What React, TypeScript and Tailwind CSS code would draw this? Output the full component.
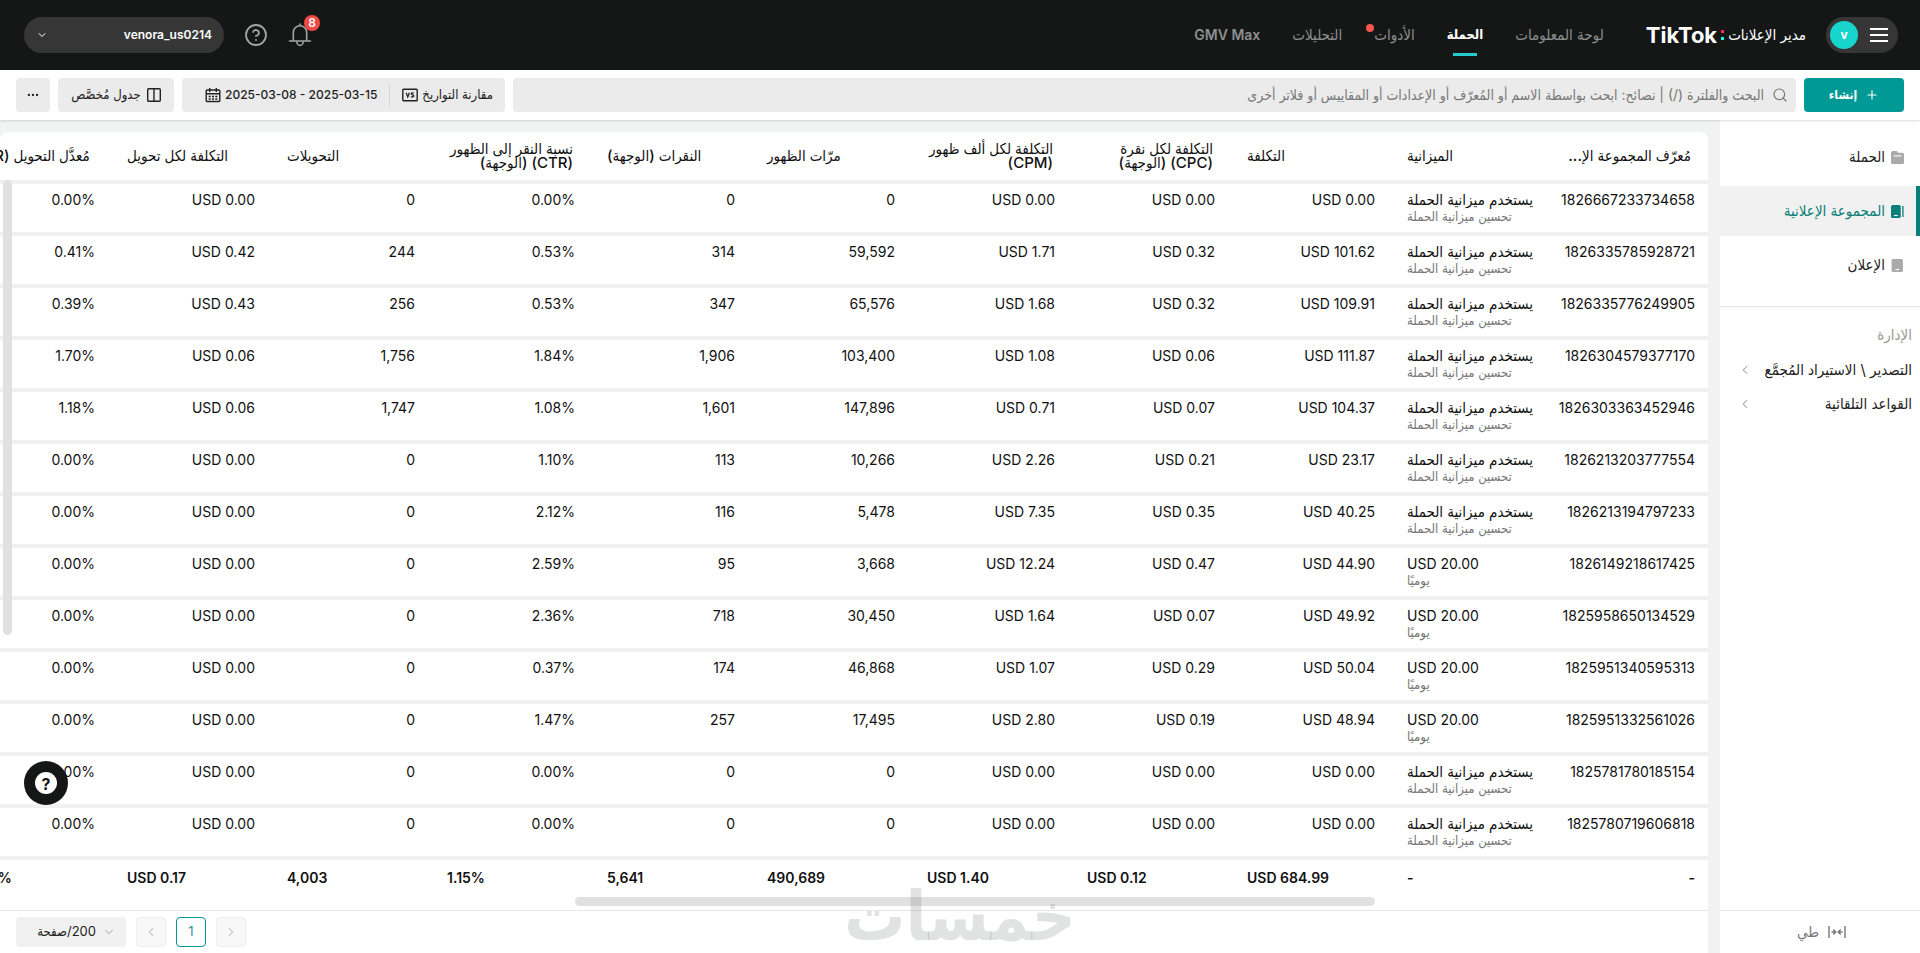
import { ChevronDown, ChevronLeft, ChevronRight, CircleHelp, MoreHorizontal, Plus, Search } from 'lucide-react';

type Row = {
  id: string;
  budget?: string;
  cost: string;
  cpc: string;
  cpm: string;
  impressions: string;
  clicks: string;
  ctr: string;
  conversions: string;
  cpa: string;
  cvr: string;
};

const rows: Row[] = [
  { id: '1826667233734658', cost: '0.00', cpc: '0.00', cpm: '0.00', impressions: '0', clicks: '0', ctr: '0.00%', conversions: '0', cpa: '0.00', cvr: '0.00%' },
  { id: '1826335785928721', cost: '101.62', cpc: '0.32', cpm: '1.71', impressions: '59,592', clicks: '314', ctr: '0.53%', conversions: '244', cpa: '0.42', cvr: '0.41%' },
  { id: '1826335776249905', cost: '109.91', cpc: '0.32', cpm: '1.68', impressions: '65,576', clicks: '347', ctr: '0.53%', conversions: '256', cpa: '0.43', cvr: '0.39%' },
  { id: '1826304579377170', cost: '111.87', cpc: '0.06', cpm: '1.08', impressions: '103,400', clicks: '1,906', ctr: '1.84%', conversions: '1,756', cpa: '0.06', cvr: '1.70%' },
  { id: '1826303363452946', cost: '104.37', cpc: '0.07', cpm: '0.71', impressions: '147,896', clicks: '1,601', ctr: '1.08%', conversions: '1,747', cpa: '0.06', cvr: '1.18%' },
  { id: '1826213203777554', cost: '23.17', cpc: '0.21', cpm: '2.26', impressions: '10,266', clicks: '113', ctr: '1.10%', conversions: '0', cpa: '0.00', cvr: '0.00%' },
  { id: '1826213194797233', cost: '40.25', cpc: '0.35', cpm: '7.35', impressions: '5,478', clicks: '116', ctr: '2.12%', conversions: '0', cpa: '0.00', cvr: '0.00%' },
  { id: '1826149218617425', budget: 'USD 20.00', cost: '44.90', cpc: '0.47', cpm: '12.24', impressions: '3,668', clicks: '95', ctr: '2.59%', conversions: '0', cpa: '0.00', cvr: '0.00%' },
  { id: '1825958650134529', budget: 'USD 20.00', cost: '49.92', cpc: '0.07', cpm: '1.64', impressions: '30,450', clicks: '718', ctr: '2.36%', conversions: '0', cpa: '0.00', cvr: '0.00%' },
  { id: '1825951340595313', budget: 'USD 20.00', cost: '50.04', cpc: '0.29', cpm: '1.07', impressions: '46,868', clicks: '174', ctr: '0.37%', conversions: '0', cpa: '0.00', cvr: '0.00%' },
  { id: '1825951332561026', budget: 'USD 20.00', cost: '48.94', cpc: '0.19', cpm: '2.80', impressions: '17,495', clicks: '257', ctr: '1.47%', conversions: '0', cpa: '0.00', cvr: '0.00%' },
  { id: '1825781780185154', cost: '0.00', cpc: '0.00', cpm: '0.00', impressions: '0', clicks: '0', ctr: '0.00%', conversions: '0', cpa: '0.00', cvr: '0.00%' },
  { id: '1825780719606818', cost: '0.00', cpc: '0.00', cpm: '0.00', impressions: '0', clicks: '0', ctr: '0.00%', conversions: '0', cpa: '0.00', cvr: '0.00%' },
];

const metricHeaders = [
  'التكلفة',
  'التكلفة لكل نقرة (CPC) (الوجهة)',
  'التكلفة لكل ألف ظهور (CPM)',
  'مرّات الظهور',
  'النقرات (الوجهة)',
  'نسبة النقر إلى الظهور (CTR) (الوجهة)',
  'التحويلات',
  'التكلفة لكل تحويل',
  'مُعدَّل التحويل (CVR)',
];

const totals = ['USD 684.99', 'USD 0.12', 'USD 1.40', '490,689', '5,641', '1.15%', '4,003', 'USD 0.17', '0.82%'];

function MenuIcon() {
  return (
    <svg viewBox="0 0 18 14" className="h-3.5 w-[18px]" stroke="currentColor" strokeWidth="2">
      <path d="M0 1h18M0 7h18M0 13h18" />
    </svg>
  );
}

function BellIcon() {
  return (
    <svg viewBox="0 0 24 24" className="size-6" fill="none" stroke="currentColor" strokeWidth="1.6" strokeLinecap="round">
      <path d="M12 1v1.500M5.300 18V9.500a6.700 6.700 0 0 1 13.400 0V18M1.500 18h21M8.800 18.500a3.200 4 0 0 0 6.400 0" />
    </svg>
  );
}

function CalendarIcon() {
  return (
    <svg viewBox="0 0 16 16" className="size-4" fill="none" stroke="currentColor" strokeWidth="1.4">
      <rect x="1.200" y="3" width="13.600" height="11.500" rx="1" />
      <path d="M1 6.800h14M4.700 1v4M11.300 1v4M3.700 9.500h2M7 9.500h2M10.300 9.500h2M3.700 12h2M7 12h2M10.300 12h2" />
    </svg>
  );
}

function CompareIcon() {
  return (
    <svg viewBox="0 0 16 14" className="h-3.5 w-4" fill="none" stroke="currentColor" strokeWidth="1.4">
      <rect x="0.800" y="1.200" width="14.400" height="11.600" rx="0.800" />
      <path d="M4.200 4.800 5.800 9 7.400 4.800M11.800 5.300c-1.200-.9-2.700-.5-2.500.5.2 1.100 2.500.9 2.500 2 0 1.200-1.800 1.400-2.800.6" strokeWidth="1.300" />
    </svg>
  );
}

function ColumnsIcon() {
  return (
    <svg viewBox="0 0 14 14" className="size-3.5" fill="none" stroke="currentColor" strokeWidth="1.4">
      <rect x="0.700" y="0.700" width="12.600" height="12.600" rx="1" />
      <path d="M7 1v12" />
    </svg>
  );
}

function CampaignIcon() {
  return (
    <svg viewBox="0 0 12 12" className="size-[13px]">
      <path d="M1.500 0h4l1 1.500h4A1.500 1.500 0 0 1 12 3v7.500a1.500 1.500 0 0 1-1.500 1.500h-9A1.500 1.500 0 0 1 0 10.500v-9A1.500 1.500 0 0 1 1.500 0Z" fill="currentColor" />
      <path d="M2.500 4.500h7" stroke="#fff" />
    </svg>
  );
}

function AdGroupIcon() {
  return (
    <svg viewBox="0 0 12 12" className="size-[13px]">
      <rect width="9" height="12" rx="1.500" fill="currentColor" />
      <path d="M11 1v10" stroke="currentColor" strokeWidth="1.200" />
      <path d="M2.700 9.700h3.600" stroke="#fff" />
    </svg>
  );
}

function AdIcon() {
  return (
    <svg viewBox="0 0 12 12" className="size-[13px]">
      <rect x="0.500" width="10.500" height="12" rx="1.500" fill="currentColor" />
      <path d="M4 9.700h3.600" stroke="#fff" />
    </svg>
  );
}

function CollapseIcon() {
  return (
    <svg viewBox="0 0 20 14" className="h-3.5 w-5" fill="none" stroke="currentColor" strokeWidth="1.4">
      <path d="M2 1v12M18 1v12M4.500 7h4M6.300 4.500 8.800 7 6.300 9.500M15.500 7h-4M13.700 4.500 11.200 7l2.500 2.500" />
    </svg>
  );
}

function TopBar() {
  const link = 'text-[#8d8f8f] hover:text-white';
  return (
    <header className="flex h-[70px] items-center bg-[#151717] pr-[22px] pl-6 text-[15px]">
      <button type="button" aria-label="القائمة" className="flex h-9 w-[72px] items-center justify-between rounded-full bg-[#363636] pr-2.5 pl-1 text-white">
        <MenuIcon />
        <span className="grid size-7 place-items-center rounded-full bg-[#17d5cd] text-xs font-bold">v</span>
      </button>
      <a href="#home" className="mr-5 flex items-center gap-1 text-white">
        <span>مدير الإعلانات</span>
        <span className="flex flex-col gap-1">
          <i className="size-[3px] bg-[#fe2c55]" />
          <i className="size-[3px] bg-[#25f4ee]" />
        </span>
        <span className="text-[22px] font-bold" dir="ltr">TikTok</span>
      </a>
      <nav className="mr-[42px] flex items-center gap-8">
        <a href="#dashboard" className={link}>لوحة المعلومات</a>
        <a href="#campaign" className="relative text-[13px] font-bold text-white">
          الحملة
          <span className="absolute top-7 left-1/2 h-[3px] w-6 -translate-x-1/2 bg-[#25c9d0]" />
        </a>
        <a href="#tools" className={`relative ${link}`}>
          الأدوات
          <span className="absolute top-0 -left-2 size-2 rounded-full bg-[#f5554f]" />
        </a>
        <a href="#analytics" className={link}>التحليلات</a>
        <a href="#gmv" className={`text-sm font-semibold ${link}`}>GMV Max</a>
      </nav>
      <div className="mr-auto flex items-center gap-5">
        <button type="button" aria-label="الإشعارات" className="relative text-[#a3a5a5]">
          <BellIcon />
          <span className="absolute -top-2 left-4 grid size-4 place-items-center rounded-full bg-[#f04a45] text-xs font-semibold text-white">8</span>
        </button>
        <button type="button" aria-label="مساعدة" className="text-[#a3a5a5]">
          <CircleHelp className="size-6" strokeWidth={1.8} />
        </button>
        <button type="button" className="flex h-9 w-[200px] items-center justify-between rounded-full bg-[#363636] px-3 text-xs font-semibold text-white">
          venora_us0214
          <ChevronDown className="size-3" />
        </button>
      </div>
    </header>
  );
}

function Toolbar() {
  const box = 'flex h-[34px] items-center rounded bg-[#ebebeb]';
  return (
    <div className="relative z-10 flex h-[50px] items-center gap-2 bg-white px-4 text-[13px] text-[#222] shadow-sm">
      <button type="button" className="flex h-[34px] w-[100px] items-center justify-center gap-2 rounded bg-[#009995] text-xs font-semibold text-white">
        <Plus className="size-3.5" />
        إنشاء
      </button>
      <label className={`${box} flex-1 gap-2 px-2 text-sm text-[#777]`}>
        <Search className="size-4" strokeWidth={1.8} />
        <input
          type="text"
          aria-label="بحث"
          className="flex-1 bg-transparent outline-none placeholder:text-[#777]"
          placeholder="البحث والفلترة (/) | نصائح: ابحث بواسطة الاسم أو المُعرّف أو الإعدادات أو المقاييس أو فلاتر أخرى"
        />
      </label>
      <div className={`${box} w-[323px]`}>
        <button type="button" className="flex items-center gap-1 px-3">
          مقارنة التواريخ
          <CompareIcon />
        </button>
        <span className="h-[22px] w-px bg-[#d5d5d5]" />
        <button type="button" className="flex items-center gap-1 pr-3 text-xs font-medium">
          <bdi dir="ltr">2025-03-08 - 2025-03-15</bdi>
          <CalendarIcon />
        </button>
      </div>
      <button type="button" className={`${box} w-[116px] justify-center gap-1.5`}>
        <ColumnsIcon />
        جدول مُخصَّص
      </button>
      <button type="button" aria-label="المزيد" className={`${box} w-[34px] justify-center`}>
        <MoreHorizontal className="size-3.5" />
      </button>
    </div>
  );
}

function Sidebar() {
  const item = 'flex h-[50px] items-center gap-1.5 border-r-4 pr-3';
  return (
    <aside className="flex w-[200px] shrink-0 flex-col bg-white text-[15px] text-[#222]">
      <nav className="flex flex-col gap-1 border-b border-[#e6e6e6] pt-3 pb-4">
        <a href="#campaigns" className={`${item} border-transparent`}>
          <span className="text-[#aaa]"><CampaignIcon /></span>
          الحملة
        </a>
        <a href="#adgroups" className={`${item} border-[#0a7f79] bg-[#f1f1f1] text-[#0a7f79]`}>
          <AdGroupIcon />
          المجموعة الإعلانية
        </a>
        <a href="#ads" className={`${item} border-transparent`}>
          <span className="text-[#aaa]"><AdIcon /></span>
          الإعلان
        </a>
      </nav>
      <h2 className="mt-4 h-6 px-2 leading-6 text-[#999]">الإدارة</h2>
      <a href="#bulk" className="mt-1.5 flex h-[34px] items-center justify-between pr-2 pl-[18px]">
        التصدير \ الاستيراد المُجمَّع
        <ChevronLeft className="size-3.5 text-[#777]" strokeWidth={1.5} />
      </a>
      <a href="#rules" className="flex h-[34px] items-center justify-between pr-2 pl-[18px]">
        القواعد التلقائية
        <ChevronLeft className="size-3.5 text-[#777]" strokeWidth={1.5} />
      </a>
      <button type="button" className="mt-auto flex h-[43px] items-center gap-2 border-t border-[#e6e6e6] pr-[73px] text-[#777]">
        <CollapseIcon />
        طي
      </button>
    </aside>
  );
}

function AdGroupTable() {
  const th = 'h-[52px] border-b-4 border-[#f1f1f1] align-middle font-medium';
  const td = 'h-[52px] px-4 pt-1.5 align-top border-b-4 border-[#f1f1f1]';
  return (
    <div className="relative overflow-hidden rounded-t-lg bg-white">
      <table className="w-[1757px] table-fixed border-separate border-spacing-0 text-sm text-[#111]">
        <thead className="text-[15px] leading-[14px]">
          <tr>
            <th scope="col" className={`${th} w-[157px] pr-[17px] pl-0 text-right whitespace-nowrap`}>مُعرّف المجموعة الإ...</th>
            <th scope="col" className={`${th} w-40 px-4 text-left`}>الميزانية</th>
            {metricHeaders.map((h) => (
              <th key={h} scope="col" className={`${th} w-40 px-4`}>
                <div className="flex justify-end">
                  <span className="max-w-[126px] text-right">{h}</span>
                </div>
              </th>
            ))}
          </tr>
        </thead>
        <tbody className="leading-5">
          {rows.map((r) => (
            <tr key={r.id}>
              <td className={`${td} pr-[13px] pl-0 text-right`}>{r.id}</td>
              <td className={`${td} pr-0 text-left`}>
                {r.budget ? <div>{r.budget}</div> : <div className="text-[15px] whitespace-nowrap">يستخدم ميزانية الحملة</div>}
                <div className="text-[13px] leading-3 text-[#777]">{r.budget ? 'يوميًا' : 'تحسين ميزانية الحملة'}</div>
              </td>
              {[`USD ${r.cost}`, `USD ${r.cpc}`, `USD ${r.cpm}`, r.impressions, r.clicks, r.ctr, r.conversions, `USD ${r.cpa}`, r.cvr].map((v, i) => (
                <td key={i} className={`${td} text-right`}>
                  <bdi dir="ltr">{v}</bdi>
                </td>
              ))}
            </tr>
          ))}
        </tbody>
        <tfoot className="font-semibold">
          <tr>
            <td className="h-[50px] pr-[13px] pb-3.5 text-right">-</td>
            <td className="px-4 pb-3.5 text-left">-</td>
            {totals.map((t) => (
              <td key={t} className="px-4 pb-3.5 text-left">
                <bdi dir="ltr">{t}</bdi>
              </td>
            ))}
          </tr>
        </tfoot>
      </table>
      <span className="absolute top-12 left-[3px] h-[455px] w-[9px] rounded-full bg-[#e1e1e1]" />
      <span className="absolute right-[333px] bottom-1 h-[9px] w-[800px] rounded-full bg-[#e1e1e1]" />
    </div>
  );
}

function Pagination() {
  const page = 'grid h-[30px] w-[30px] place-items-center rounded border';
  return (
    <footer className="flex h-[43px] flex-row-reverse items-center gap-2.5 border-t border-[#e6e6e6] bg-white pl-4 text-[13px]">
      <div className="relative flex items-center">
        <select aria-label="عدد الصفوف في الصفحة" className="h-[30px] w-[110px] appearance-none rounded bg-[#f1f1f1] pr-[30px] pl-3 text-[#222]">
          <option>200/صفحة</option>
        </select>
        <ChevronDown className="pointer-events-none absolute right-2.5 size-3.5 text-[#999]" strokeWidth={1.5} />
      </div>
      <button type="button" aria-label="السابق" className={`${page} border-[#eee] bg-[#f8f8f8] text-[#ccc]`}>
        <ChevronLeft className="size-3.5" />
      </button>
      <button type="button" className={`${page} border-[#009995] text-[#2a8fa0]`}>1</button>
      <button type="button" aria-label="التالي" className={`${page} border-[#eee] bg-[#f8f8f8] text-[#ccc]`}>
        <ChevronRight className="size-3.5" />
      </button>
    </footer>
  );
}

export default function App() {
  return (
    <div dir="rtl" className="relative flex min-h-screen flex-col overflow-hidden bg-[#f1f2f2] font-['Inter','DejaVu_Sans_Condensed','DejaVu_Sans',sans-serif]">
      <TopBar />
      <Toolbar />
      <div className="flex flex-1">
        <Sidebar />
        <main className="mr-3 flex min-w-0 flex-1 flex-col pt-3">
          <AdGroupTable />
          <Pagination />
        </main>
      </div>
      <button type="button" aria-label="المساعدة" className="absolute bottom-[148px] left-6 grid size-11 place-items-center rounded-full bg-[#151717]">
        <span className="grid size-[22px] place-items-center rounded-full bg-white text-base font-bold text-[#151717]">?</span>
      </button>
      <div className="pointer-events-none absolute bottom-1 left-1/2 -translate-x-1/2 text-[68px] leading-none font-bold text-[#6b7272]/20">خمسات</div>
    </div>
  );
}
